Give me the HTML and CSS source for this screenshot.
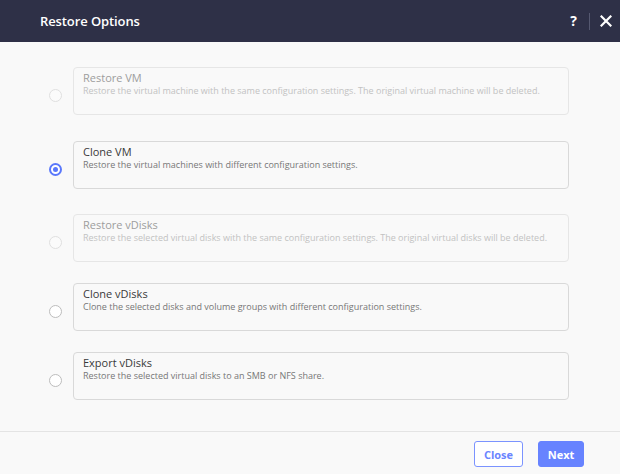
FILE: index.html
```html
<!DOCTYPE html>
<html>
<head>
<meta charset="utf-8">
<link rel="stylesheet" href="styles.css">
</head>
<body>
<div class="dialog">
  <header class="header">
    <h1 class="title">Restore Options</h1>
    <div class="header-actions">
      <span class="help">?</span>
      <span class="divider"></span>
      <svg class="close-icon" width="12" height="12" viewBox="0 0 12 12"><path d="M1.5 1.5 L10.5 10.5 M10.5 1.5 L1.5 10.5" stroke="#fff" stroke-width="2.2" stroke-linecap="square"/></svg>
    </div>
  </header>
  <main class="content">
    <div class="option disabled gap-a">
      <span class="radio"></span>
      <div class="card">
        <div class="opt-title">Restore VM</div>
        <div class="opt-desc">Restore the virtual machine with the same configuration settings. The original virtual machine will be deleted.</div>
      </div>
    </div>
    <div class="option gap-b">
      <span class="radio checked"></span>
      <div class="card">
        <div class="opt-title">Clone VM</div>
        <div class="opt-desc">Restore the virtual machines with different configuration settings.</div>
      </div>
    </div>
    <div class="option disabled gap-c">
      <span class="radio"></span>
      <div class="card">
        <div class="opt-title">Restore vDisks</div>
        <div class="opt-desc">Restore the selected virtual disks with the same configuration settings. The original virtual disks will be deleted.</div>
      </div>
    </div>
    <div class="option gap-c">
      <span class="radio"></span>
      <div class="card">
        <div class="opt-title">Clone vDisks</div>
        <div class="opt-desc">Clone the selected disks and volume groups with different configuration settings.</div>
      </div>
    </div>
    <div class="option">
      <span class="radio"></span>
      <div class="card">
        <div class="opt-title">Export vDisks</div>
        <div class="opt-desc">Restore the selected virtual disks to an SMB or NFS share.</div>
      </div>
    </div>
  </main>
  <footer class="footer">
    <button class="btn btn-secondary">Close</button>
    <button class="btn btn-primary">Next</button>
  </footer>
</div>
</body>
</html>
```

FILE: styles.css
```css
* { box-sizing: border-box; }
html, body { margin: 0; padding: 0; }
body {
  font-family: "Open Sans", "Noto Sans", sans-serif;
  background: #f9f9f9;
  width: 620px;
  height: 474px;
  overflow: hidden;
}
.dialog {
  display: flex;
  flex-direction: column;
  height: 474px;
}
.header {
  height: 42px;
  background: #2e3047;
  display: flex;
  align-items: center;
  justify-content: space-between;
  padding: 0 8px 0 40px;
}
.title {
  margin: 0;
  font-size: 13px;
  font-weight: 600;
  color: #ffffff;
  letter-spacing: -0.1px;
}
.header-actions {
  display: flex;
  align-items: center;
}
.help {
  color: #fff;
  font-weight: 700;
  font-size: 14px;
  line-height: 16px;
}
.divider {
  width: 1px;
  height: 17px;
  background: #555870;
  margin: 0 10px 0 12px;
}
.close-icon { display: block; }
.content {
  flex: 1;
  padding: 25px 51px 0 49px;
}
.option {
  display: flex;
  align-items: flex-start;
  gap: 11px;
  margin-bottom: 21px;
}
.gap-a { margin-bottom: 26px; }
.gap-b { margin-bottom: 25px; }
.gap-c { margin-bottom: 21px; }
.radio {
  flex: none;
  width: 13px;
  height: 13px;
  border-radius: 50%;
  border: 1px solid #bdbdbd;
  background: #fff;
  margin-top: 22px;
  position: relative;
}
.disabled .radio { border-color: #e0e0e0; background: #fbfbfb; }
.radio.checked {
  border: 2px solid #5a78fb;
}
.radio.checked::after {
  content: "";
  position: absolute;
  left: 2px; top: 2px;
  width: 5px; height: 5px;
  border-radius: 50%;
  background: #5a78fb;
}
.card {
  flex: 1;
  height: 48px;
  border: 1px solid #d9d9d9;
  border-radius: 4px;
  padding: 2px 9px 0;
  background: #f9f9f9;
}
.disabled .card { border-color: #e6e6e6; }
.opt-title {
  font-size: 11px;
  line-height: 15px;
  color: #3a3a3a;
}
.opt-desc {
  font-size: 9px;
  line-height: 12px;
  color: #777777;
  white-space: nowrap;
}
.disabled .opt-title { color: #9d9d9d; }
.disabled .opt-desc { color: #c2c2c2; }
.footer {
  height: 43px;
  border-top: 1px solid #e4e4e4;
  display: flex;
  justify-content: flex-end;
  align-items: flex-start;
  gap: 15px;
  padding: 9px 36px 0 0;
}
.btn {
  font-family: "Open Sans", "Noto Sans", sans-serif;
  font-size: 11px;
  font-weight: 700;
  height: 26px;
  border-radius: 3px;
  padding: 0;
  cursor: pointer;
}
.btn-secondary {
  width: 49px;
  background: #ffffff;
  border: 1px solid #7b93ff;
  color: #6b85ff;
}
.btn-primary {
  width: 46px;
  background: #6783ff;
  border: 1px solid #6783ff;
  color: #ffffff;
}
```
